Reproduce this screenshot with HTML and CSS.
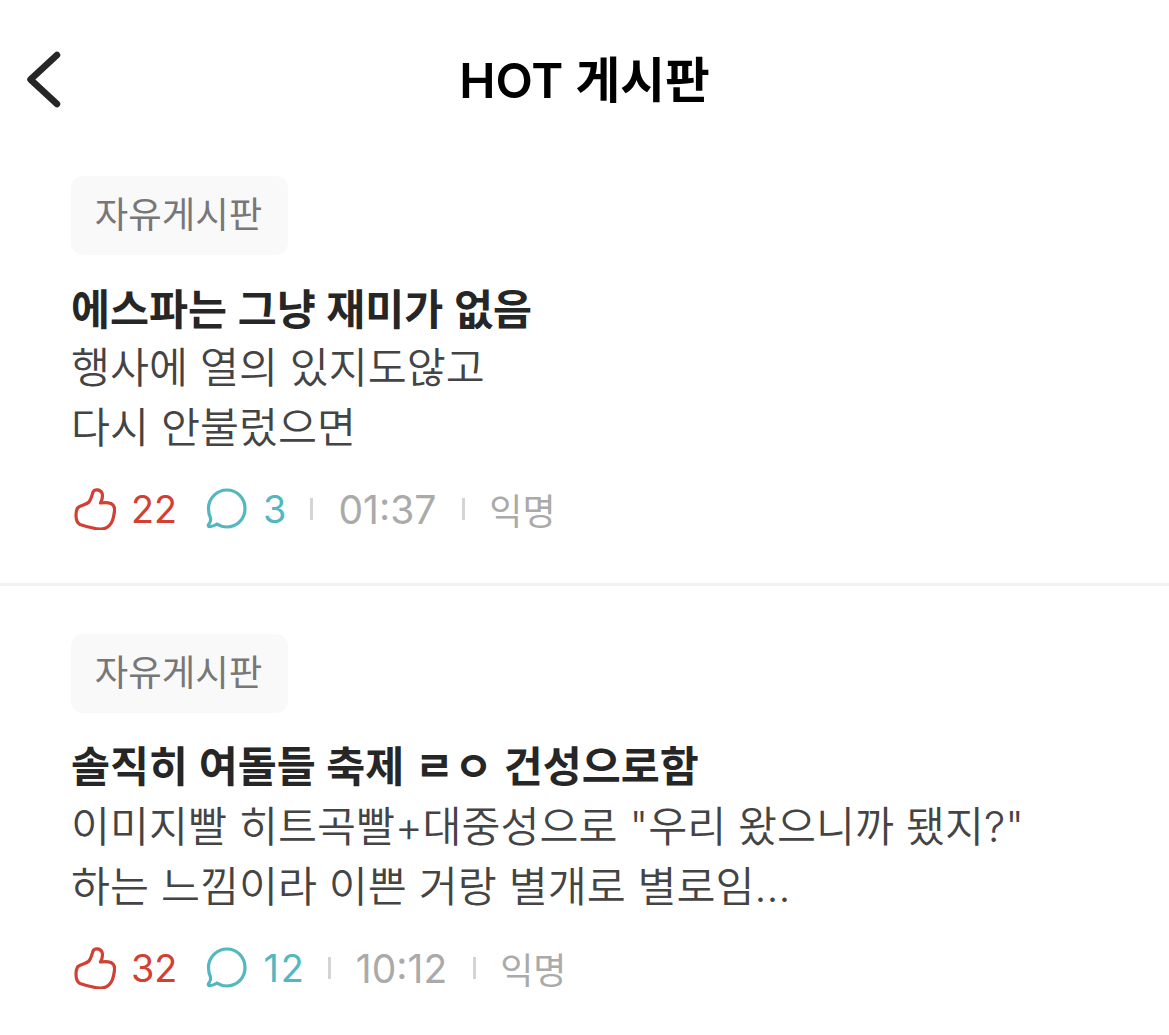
FILE: index.html
```html
<!DOCTYPE html>
<html lang="ko">
<head>
<meta charset="utf-8">
<title>HOT 게시판</title>
<link rel="stylesheet" href="styles.css">
</head>
<body>
<header class="top">
  <svg class="back" width="36" height="60" viewBox="0 0 36 60"><path d="M32 4 L5.500 28.500 L32 53" fill="none" stroke="#262626" stroke-width="6.500" stroke-linecap="round" stroke-linejoin="round"/></svg>
  <h1 class="heading">HOT 게시판</h1>
</header>
<article class="post post-first">
  <div class="tag">자유게시판</div>
  <h2 class="title">에스파는 그냥 재미가 없음</h2>
  <p class="body">행사에 열의 있지도않고<br>다시 안불렀으면</p>
  <div class="meta">
    <svg class="ico" width="42" height="42" viewBox="0 0 42 42"><path d="M3.500 20 C7 17 12 17 15 14 C17.500 11 18 7 19 4 C20.500 1 26 1 28 5 C29.500 9 28 12 26.500 15 C30 14.500 34 14.500 37 15.500 C40 17 41 19.500 40.500 23 C40 27 39.500 31 37.500 34.500 C35 39 31 41 27 41 C20 41 12 38.500 6 36.500 C3 35 2 31 2 27 C2 24 2.500 22 3.500 20 Z" fill="none" stroke="#d33f33" stroke-width="3.200" stroke-linejoin="round"/></svg>
    <span class="num like">22</span>
    <svg class="ico ico-c" width="42" height="42" viewBox="0 0 42 42"><path d="M21 2 C31 2 39 10 39 20.5 C39 31 31 39 21 39 C17 39 14 38 11 36 C8 38 6 39 3 38.5 C2 38 2 37 3 36 C4.500 34 5 32 4.500 30 C3 27 2.500 24 2.500 20.500 C2.500 10 11 2 21 2 Z" fill="none" stroke="#53b7bf" stroke-width="3.200" stroke-linejoin="round"/></svg>
    <span class="num cmt">3</span>
    <i class="sep"></i>
    <span class="num time">01:37</span>
    <i class="sep sep-b"></i>
    <span class="anon">익명</span>
  </div>
</article>
<article class="post post-second">
  <div class="tag">자유게시판</div>
  <h2 class="title">솔직히 여돌들 축제 ㄹㅇ 건성으로함</h2>
  <p class="body">이미지빨 히트곡빨+대중성으로 "우리 왔으니까 됐지?"<br>하는 느낌이라 이쁜 거랑 별개로 별로임...</p>
  <div class="meta">
    <svg class="ico" width="42" height="42" viewBox="0 0 42 42"><path d="M3.500 20 C7 17 12 17 15 14 C17.500 11 18 7 19 4 C20.500 1 26 1 28 5 C29.500 9 28 12 26.500 15 C30 14.500 34 14.500 37 15.500 C40 17 41 19.500 40.500 23 C40 27 39.500 31 37.500 34.500 C35 39 31 41 27 41 C20 41 12 38.500 6 36.500 C3 35 2 31 2 27 C2 24 2.500 22 3.500 20 Z" fill="none" stroke="#d33f33" stroke-width="3.200" stroke-linejoin="round"/></svg>
    <span class="num like">32</span>
    <svg class="ico ico-c" width="42" height="42" viewBox="0 0 42 42"><path d="M21 2 C31 2 39 10 39 20.5 C39 31 31 39 21 39 C17 39 14 38 11 36 C8 38 6 39 3 38.5 C2 38 2 37 3 36 C4.500 34 5 32 4.500 30 C3 27 2.500 24 2.500 20.500 C2.500 10 11 2 21 2 Z" fill="none" stroke="#53b7bf" stroke-width="3.200" stroke-linejoin="round"/></svg>
    <span class="num cmt">12</span>
    <i class="sep"></i>
    <span class="num time">10:12</span>
    <i class="sep sep-b"></i>
    <span class="anon">익명</span>
  </div>
</article>
</body>
</html>
```
FILE: styles.css
```css
* { box-sizing: border-box; }
html, body { margin: 0; padding: 0; }
body {
  width: 1169px;
  height: 1035px;
  overflow: hidden;
  background: #fff;
  font-family: Inter, "Noto Sans CJK KR", sans-serif;
}
.top {
  height: 176px;
  position: relative;
  display: flex;
  justify-content: center;
  padding-top: 48px;
}
.back { position: absolute; left: 25px; top: 51px; }
.heading {
  margin: 0;
  font-size: 48.6px;
  line-height: 66px;
  font-weight: 600;
  color: #000;
}
.post { padding: 0 72px 0 71px; }
.post-first { height: 410px; border-bottom: 3px solid #f1f1f1; }
.post-second { padding-top: 48px; }
.tag {
  width: 217px;
  height: 79px;
  border-radius: 12px;
  background: #f9f9f9;
  color: #777;
  font-size: 36.4px;
  line-height: 78px;
  padding-right: 2px;
  text-align: center;
}
.title {
  margin: 23px 0 0;
  font-size: 42.4px;
  line-height: 64px;
  font-weight: 600;
  color: #262626;
}
.body {
  margin: -4px 0 0;
  font-size: 42.4px;
  line-height: 60px;
  color: #444;
  font-weight: 350;
}
.post-second .title { margin-top: 22px; }
.post-second .body { margin-top: -2px; }
.meta {
  display: flex;
  align-items: center;
  height: 50px;
  margin-top: 26px;
  padding-left: 3px;
}
.ico { flex: none; }
.ico-c { margin-left: 29px; }
.num { font-size: 37.8px; margin-left: 15px; }
.like { color: #d33f33; }
.cmt { color: #53b7bf; letter-spacing: 2px; }
.time { color: #aaa; margin-left: 25px; font-size: 39px; }
.sep { width: 3px; height: 22px; background: #d4d4d4; margin-left: 22px; }
.sep-b { margin-left: 26px; }
.anon { color: #aaa; font-size: 36px; margin-left: 24px; }
```
